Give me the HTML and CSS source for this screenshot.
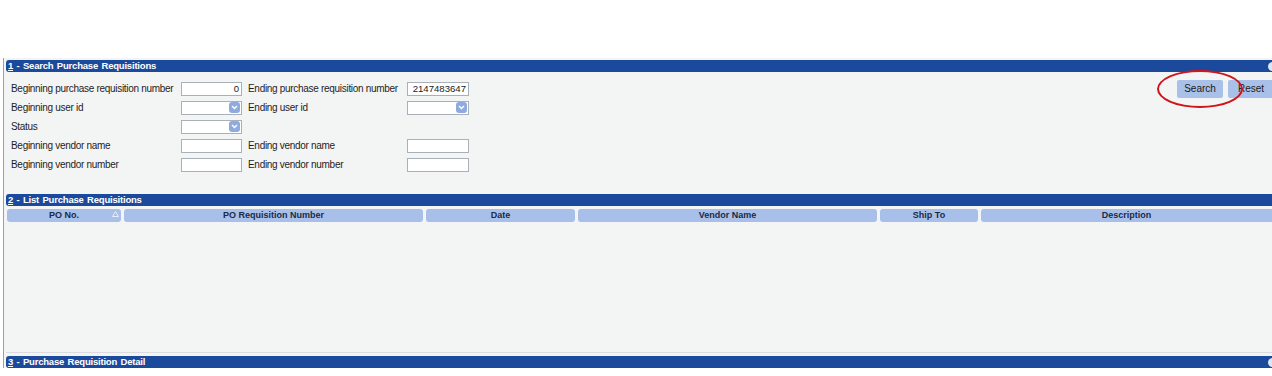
FILE: index.html
```html
<!DOCTYPE html>
<html>
<head>
<meta charset="utf-8">
<link rel="stylesheet" href="styles.css">
</head>
<body>
<div class="page">
  <div class="frame">
    <div class="bar"><span class="bar-title"><u>1</u> - Search Purchase Requisitions</span><span class="bar-icon"></span></div>
    <div class="search-body">
      <div class="form">
        <span class="lbl">Beginning purchase requisition number</span>
        <span class="inp num">0</span>
        <span class="lbl lbl2">Ending purchase requisition number</span>
        <span class="inp num">2147483647</span>

        <span class="lbl">Beginning user id</span>
        <span class="inp sel"><span class="dd"><svg width="7" height="5" viewBox="0 0 7 5"><path d="M1 1 L3.5 3.5 L6 1" fill="none" stroke="#fff" stroke-width="1.4"/></svg></span></span>
        <span class="lbl lbl2">Ending user id</span>
        <span class="inp sel"><span class="dd"><svg width="7" height="5" viewBox="0 0 7 5"><path d="M1 1 L3.5 3.5 L6 1" fill="none" stroke="#fff" stroke-width="1.4"/></svg></span></span>

        <span class="lbl">Status</span>
        <span class="inp sel"><span class="dd"><svg width="7" height="5" viewBox="0 0 7 5"><path d="M1 1 L3.5 3.5 L6 1" fill="none" stroke="#fff" stroke-width="1.4"/></svg></span></span>
        <span></span>
        <span></span>

        <span class="lbl">Beginning vendor name</span>
        <span class="inp"></span>
        <span class="lbl lbl2">Ending vendor name</span>
        <span class="inp"></span>

        <span class="lbl">Beginning vendor number</span>
        <span class="inp"></span>
        <span class="lbl lbl2">Ending vendor number</span>
        <span class="inp"></span>
      </div>
      <div class="buttons">
        <span class="btn">Search</span>
        <span class="btn">Reset</span>
        <span class="highlight"></span>
      </div>
    </div>
    <div class="bar"><span class="bar-title"><u>2</u> - List Purchase Requisitions</span></div>
    <div class="list-body">
      <div class="thead">
        <span class="th c1">PO No.<svg class="sort" width="7" height="6" viewBox="0 0 7 6"><path d="M3.5 0.5 L6.5 5.5 L0.5 5.5 Z" fill="none" stroke="#e8eefa" stroke-width="1"/></svg></span>
        <span class="th c2">PO Requisition Number</span>
        <span class="th c3">Date</span>
        <span class="th c4">Vendor Name</span>
        <span class="th c5">Ship To</span>
        <span class="th c6">Description</span>
      </div>
    </div>
    <div class="bar"><span class="bar-title"><u>3</u> - Purchase Requisition Detail</span><span class="bar-icon"></span></div>
  </div>
</div>
</body>
</html>
```

FILE: styles.css
```css
html, body {
  margin: 0;
  padding: 0;
  background: #ffffff;
  overflow: hidden;
}
body {
  width: 1272px;
  height: 376px;
  font-family: "Liberation Sans", Arial, sans-serif;
  color: #1a1a1a;
}
.page {
  padding-top: 58px;
}
.frame {
  margin-left: 3px;
  border-left: 1px solid #9aa0a6;
  background: #f3f4f4;
  padding: 2px 0 0 2px;
  overflow: hidden;
}
.bar {
  height: 12px;
  background: #1b4a9c;
  border-radius: 3px 0 0 3px;
  display: flex;
  align-items: center;
  justify-content: space-between;
  color: #ffffff;
  font-weight: bold;
  font-size: 9.5px;
  line-height: 12px;
  padding-left: 2px;
}
.bar-title {
  white-space: pre;
  word-spacing: 1px;
  letter-spacing: -0.2px;
}
.bar-icon {
  width: 9px;
  height: 9px;
  border-radius: 50%;
  background: #dfe6f3;
  margin-right: -5px;
}
.search-body {
  height: 122px;
  display: flex;
  justify-content: space-between;
  align-items: flex-start;
}
.form {
  display: grid;
  grid-template-columns: 164px 61px 153px 62px;
  grid-auto-rows: 19px;
  column-gap: 6px;
  padding: 7px 0 0 5px;
  font-size: 10px;
  letter-spacing: -0.3px;
  align-items: center;
}
.lbl {
  white-space: nowrap;
  color: #1e1e1e;
}
.inp {
  height: 14px;
  box-sizing: border-box;
  border: 1px solid #a9b0b8;
  background: #ffffff;
  font-size: 9.6px;
  letter-spacing: 0;
  line-height: 12px;
  display: flex;
  align-items: center;
  justify-content: flex-end;
  padding-right: 2px;
}
.inp.num {
  color: #222;
}
.sel {
  padding-right: 1px;
}
.dd {
  width: 11px;
  height: 11px;
  border-radius: 3px;
  background: #8eaadf;
  display: flex;
  align-items: center;
  justify-content: center;
}
.buttons {
  position: relative;
  display: flex;
  gap: 5px;
  margin-top: 8px;
  margin-right: -2px;
}
.btn {
  width: 46px;
  height: 18px;
  border-radius: 2px;
  background: #a9c0e9;
  font-size: 10px;
  line-height: 18px;
  text-align: center;
  color: #1a1a1a;
}
.highlight {
  position: absolute;
  left: -20px;
  top: -10px;
  width: 82px;
  height: 34px;
  border: 2.5px solid #d0141b;
  border-radius: 50%;
}
.list-body {
  height: 146px;
  border-bottom: 1px solid #dadcdf;
  margin-bottom: 3px;
}
.thead {
  display: flex;
  gap: 3px;
  padding: 3px 0 0 1px;
}
.th {
  position: relative;
  height: 13px;
  border-radius: 3px;
  background: #a7bfe9;
  font-size: 9px;
  font-weight: bold;
  color: #1c2a44;
  line-height: 13px;
  text-align: center;
  white-space: nowrap;
}
.c1 { width: 114px; }
.c2 { width: 299px; }
.c3 { width: 149px; }
.c4 { width: 299px; }
.c5 { width: 98px; }
.c6 { flex: 1; border-radius: 3px 0 0 3px; }
.sort {
  position: absolute;
  right: 2px;
  top: 2px;
}
```
